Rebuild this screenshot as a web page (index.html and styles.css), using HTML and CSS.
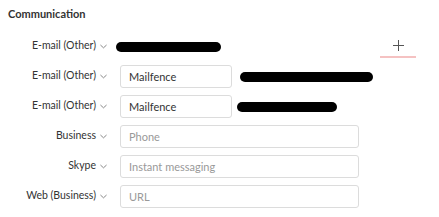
FILE: index.html
```html
<!DOCTYPE html>
<html>
<head>
<meta charset="utf-8">
<link rel="stylesheet" href="styles.css">
</head>
<body>
<div class="page">
  <h2 class="title">Communication</h2>
  <div class="form">
    <div class="row">
      <div class="label">E-mail (Other)<svg class="chev" viewBox="0 0 8 5"><path d="M0.5 0.8 L4 4 L7.5 0.8" /></svg></div>
      <span class="redact redact-first"></span>
      <button class="add" type="button"><svg viewBox="0 0 11 11"><path d="M5.5 0 V11 M0 5.5 H11" /></svg></button>
    </div>
    <div class="row">
      <div class="label">E-mail (Other)<svg class="chev" viewBox="0 0 8 5"><path d="M0.5 0.8 L4 4 L7.5 0.8" /></svg></div>
      <div class="field field-small">Mailfence</div>
      <span class="redact redact-two"></span>
    </div>
    <div class="row">
      <div class="label">E-mail (Other)<svg class="chev" viewBox="0 0 8 5"><path d="M0.5 0.8 L4 4 L7.5 0.8" /></svg></div>
      <div class="field field-small">Mailfence</div>
      <span class="redact redact-three"></span>
    </div>
    <div class="row">
      <div class="label">Business<svg class="chev" viewBox="0 0 8 5"><path d="M0.5 0.8 L4 4 L7.5 0.8" /></svg></div>
      <div class="field field-large placeholder">Phone</div>
    </div>
    <div class="row">
      <div class="label">Skype<svg class="chev" viewBox="0 0 8 5"><path d="M0.5 0.8 L4 4 L7.5 0.8" /></svg></div>
      <div class="field field-large placeholder">Instant messaging</div>
    </div>
    <div class="row">
      <div class="label">Web (Business)<svg class="chev" viewBox="0 0 8 5"><path d="M0.5 0.8 L4 4 L7.5 0.8" /></svg></div>
      <div class="field field-large placeholder">URL</div>
    </div>
  </div>
</div>
</body>
</html>
```
FILE: styles.css
```css
html, body {
  margin: 0;
  padding: 0;
  background: #fff;
}
body {
  font-family: Lato, "Open Sans", sans-serif;
  color: #333;
  font-size: 11px;
}
.page {
  padding: 6px 23px 0 8px;
}
.title {
  margin: 0;
  font-size: 11px;
  font-weight: bold;
  line-height: 15px;
  color: #333;
}
.form {
  margin-top: 14px;
  display: flex;
  flex-direction: column;
  gap: 7px;
}
.row {
  display: flex;
  align-items: center;
  height: 23px;
}
.label {
  width: 100px;
  display: flex;
  justify-content: flex-end;
  align-items: center;
  gap: 4px;
  color: #333;
  font-size: 10.5px;
  margin-top: -3px;
}
.chev {
  width: 7px;
  height: 5px;
  margin-top: 2px;
  margin-right: 1px;
  fill: none;
  stroke: #777;
  stroke-width: 1;
}
.field {
  margin-left: 12px;
  height: 23px;
  box-sizing: border-box;
  border: 1px solid #dcdcdc;
  border-radius: 3px;
  padding: 0 8px;
  display: flex;
  align-items: center;
  color: #333;
}
.field-small { width: 112px; }
.field-large { width: 239px; }
.placeholder { color: #999; }
.redact {
  display: inline-block;
  height: 10px;
  background: #000;
  border-radius: 5px;
}
.redact-first {
  margin-left: 8px;
  width: 105px;
}
.redact-two {
  margin-left: 8px;
  width: 133px;
  margin-top: 1px;
}
.redact-three {
  margin-left: 5px;
  width: 100px;
}
.add {
  margin-left: auto;
  width: 36px;
  height: 23px;
  padding: 0;
  border: none;
  border-bottom: 2px solid #f5c2c2;
  background: none;
  display: flex;
  align-items: center;
  justify-content: center;
}
.add svg {
  width: 11px;
  height: 11px;
  fill: none;
  stroke: #555;
  stroke-width: 1;
}
```
